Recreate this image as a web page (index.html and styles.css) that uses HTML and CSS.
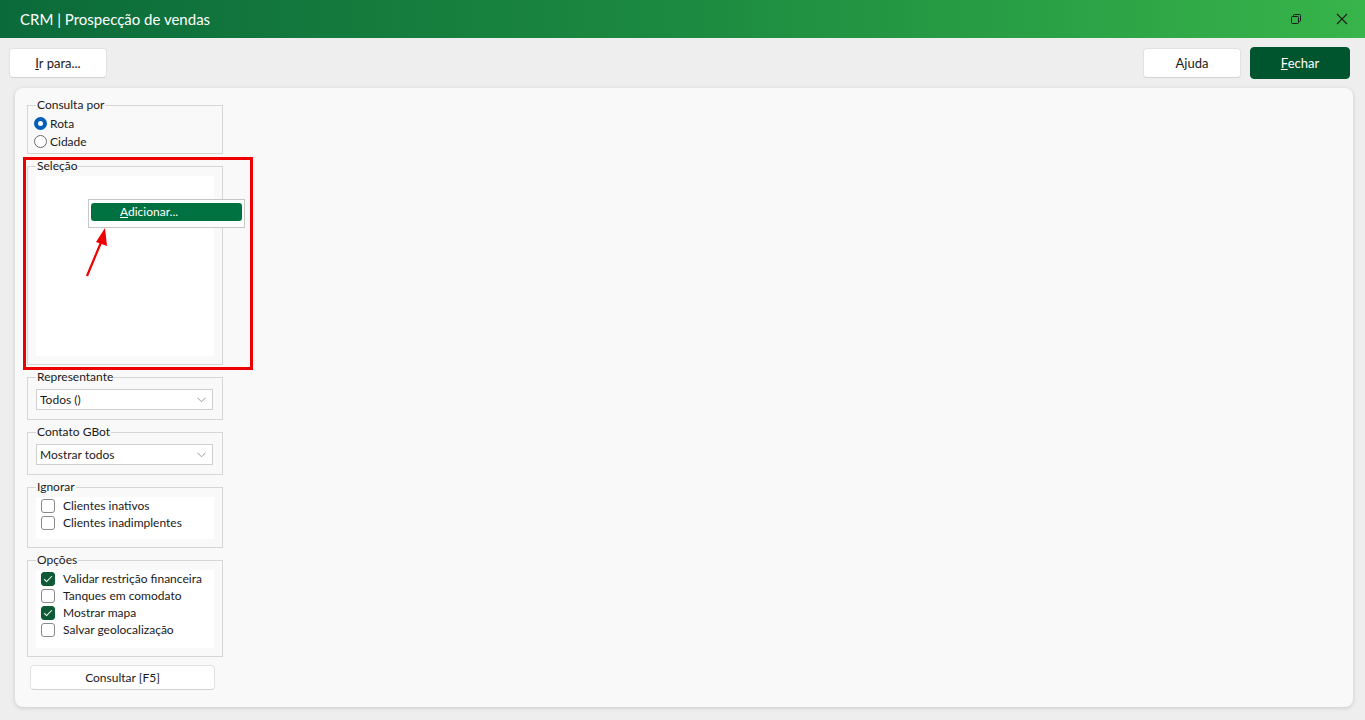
FILE: index.html
```html
<!DOCTYPE html>
<html lang="pt-BR">
<head>
  <meta charset="UTF-8" />
  <meta name="viewport" content="width=device-width, initial-scale=1.0">
  <title>CRM | Prospecção de vendas</title>
  <link rel="stylesheet" href="styles.css">
</head>
<body>
  <div class="titlebar">
    <span class="title">CRM | Prospecção de vendas</span>
    <div class="win-btns">
      <span class="win-btn">
        <svg width="12" height="12" viewBox="0 0 12 12" fill="none" stroke="#1b1b1b" stroke-width="1">
          <rect x="1.5" y="3.5" width="7" height="7" rx="1"/>
          <path d="M3.5 3.5V2.5a1 1 0 0 1 1-1h5a1 1 0 0 1 1 1v5a1 1 0 0 1-1 1h-1"/>
        </svg>
      </span>
      <span class="win-btn">
        <svg width="12" height="12" viewBox="0 0 12 12" fill="none" stroke="#1b1b1b" stroke-width="1.1">
          <path d="M1 1l10 10M11 1L1 11"/>
        </svg>
      </span>
    </div>
  </div>

  <div class="toolbar">
    <button class="btn"><u>I</u>r para...</button>
    <div class="spacer"></div>
    <button class="btn">Ajuda</button>
    <button class="btn primary"><u>F</u>echar</button>
  </div>

  <div class="panel">
    <div class="filters">
      <fieldset class="group radios">
        <legend>Consulta por</legend>
        <label class="radio-row"><span class="radio checked"></span>Rota</label>
        <label class="radio-row"><span class="radio"></span>Cidade</label>
      </fieldset>

      <fieldset class="group">
        <legend>Seleção</legend>
        <div class="listbox"></div>
      </fieldset>

      <fieldset class="group">
        <legend>Representante</legend>
        <div class="select">Todos ()
          <svg class="chev" width="9" height="6" viewBox="0 0 9 6" fill="none" stroke="#9a9a9a" stroke-width="1"><path d="M0.5 0.8l4 4 4-4"/></svg>
        </div>
      </fieldset>

      <fieldset class="group">
        <legend>Contato GBot</legend>
        <div class="select">Mostrar todos
          <svg class="chev" width="9" height="6" viewBox="0 0 9 6" fill="none" stroke="#9a9a9a" stroke-width="1"><path d="M0.5 0.8l4 4 4-4"/></svg>
        </div>
      </fieldset>

      <fieldset class="group">
        <legend>Ignorar</legend>
        <div class="checklist short">
          <label class="check-row"><span class="check"></span>Clientes inativos</label>
          <label class="check-row"><span class="check"></span>Clientes inadimplentes</label>
        </div>
      </fieldset>

      <fieldset class="group">
        <legend>Opções</legend>
        <div class="checklist">
          <label class="check-row"><span class="check on"></span>Validar restrição financeira</label>
          <label class="check-row"><span class="check"></span>Tanques em comodato</label>
          <label class="check-row"><span class="check on"></span>Mostrar mapa</label>
          <label class="check-row"><span class="check"></span>Salvar geolocalização</label>
        </div>
      </fieldset>

      <button class="btn query">Consultar [F5]</button>
    </div>

    <!-- annotation + popup menu over the Seleção box -->
    <div class="highlight"></div>
    <div class="menu">
      <div class="menu-item"><u>A</u>dicionar...</div>
    </div>
    <svg class="arrow" width="30" height="60" viewBox="0 0 30 60">
      <path d="M2 50L17 14" stroke="#ee0000" stroke-width="2.2" fill="none"/>
      <path d="M20 2L11 16l11 4z" fill="#ee0000"/>
    </svg>
  </div>
</body>
</html>
```

FILE: styles.css
```css
body {
  margin: 0;
  background: #eeeeee;
  font-family: Lato, "Noto Sans", sans-serif;
  font-size: 12px;
  color: #1a1a1a;
  height: 720px;
  overflow: hidden;
}
.titlebar {
  height: 38px;
  display: flex;
  align-items: center;
  justify-content: space-between;
  background: linear-gradient(to right, #0b6a3a 0%, #1c8a40 50%, #37b44a 100%);
  color: #fff;
}
.title {
  font-size: 15px;
  margin-left: 20px;
}
.win-btns {
  display: flex;
}
.win-btn {
  width: 46px;
  display: flex;
  justify-content: center;
}
.toolbar {
  height: 50px;
  display: flex;
  align-items: center;
  padding: 0 15px 0 9px;
  gap: 9px;
}
.spacer {
  flex: 1;
}
.btn {
  font-family: inherit;
  font-size: 13px;
  color: #1a1a1a;
  background: #fff;
  border: 1px solid #e2e2e2;
  border-bottom-color: #d2d2d2;
  border-radius: 4px;
  width: 98px;
  height: 30px;
  padding: 0;
}
.btn.primary {
  background: #00542e;
  border-color: #00542e;
  color: #fff;
  width: 100px;
  height: 32px;
}
.panel {
  position: relative;
  margin: 0 12px 0 15px;
  height: 619px;
  box-sizing: border-box;
  background: #f9f9f9;
  border-radius: 8px;
  box-shadow: 0 1px 4px rgba(0, 0, 0, 0.16);
  padding: 10px 0 0 12px;
}
.filters {
  width: 196px;
  display: flex;
  flex-direction: column;
}
.group {
  margin: 0 0 5px;
  border: 1px solid #d6d6d6;
  padding: 2px 8px 8px;
  min-width: 0;
}
.group.radios {
  padding-bottom: 3px;
}
.group legend {
  padding: 0 1px;
  margin-left: 0;
  line-height: 14px;
}
.radio-row, .check-row {
  display: flex;
  align-items: center;
  height: 18px;
}
.group .radio-row {
  margin-left: -2px;
}
.radio {
  width: 11px;
  height: 11px;
  border: 1px solid #6b6b6b;
  border-radius: 50%;
  margin-right: 3px;
  background: #fff;
}
.radio.checked {
  border: 4px solid #005fb8;
  width: 5px;
  height: 5px;
}
.listbox {
  height: 180px;
  background: #fff;
  margin-top: 1px;
}
.select {
  position: relative;
  height: 19px;
  line-height: 19px;
  border: 1px solid #cfcfcf;
  background: #fff;
  padding-left: 3px;
  margin: 3px 1px 1px 0;
}
.chev {
  position: absolute;
  right: 6px;
  top: 7px;
}
.checklist {
  background: #fff;
  padding: 0 0 10px 5px;
  margin-top: 1px;
}
.checklist.short {
  padding-bottom: 8px;
}
.check-row {
  height: 17px;
}
.check {
  width: 12px;
  height: 12px;
  border: 1px solid #8a8a8a;
  border-radius: 3px;
  margin-right: 8px;
  background: #fff;
  position: relative;
}
.check.on {
  background: #0e5a36;
  border-color: #0e5a36;
}
.check.on::after {
  content: "";
  position: absolute;
  left: 4px;
  top: 1px;
  width: 3px;
  height: 7px;
  border: solid #fff;
  border-width: 0 1.5px 1.5px 0;
  transform: rotate(45deg);
}
.btn.query {
  width: 185px;
  height: 25px;
  font-size: 12px;
  margin: 3px 0 0 3px;
}
.highlight {
  position: absolute;
  left: 8px;
  top: 69px;
  width: 224px;
  height: 207px;
  border: 3px solid #ee0000;
}
.menu {
  position: absolute;
  left: 73px;
  top: 111px;
  width: 155px;
  height: 27px;
  background: #fff;
  border: 1px solid #c6c6c6;
}
.menu-item {
  margin: 3px 2px 0 2px;
  height: 18px;
  line-height: 18px;
  background: #007140;
  border-radius: 3px;
  color: #fff;
  padding-left: 29px;
}
.arrow {
  position: absolute;
  left: 70px;
  top: 138px;
}
```
